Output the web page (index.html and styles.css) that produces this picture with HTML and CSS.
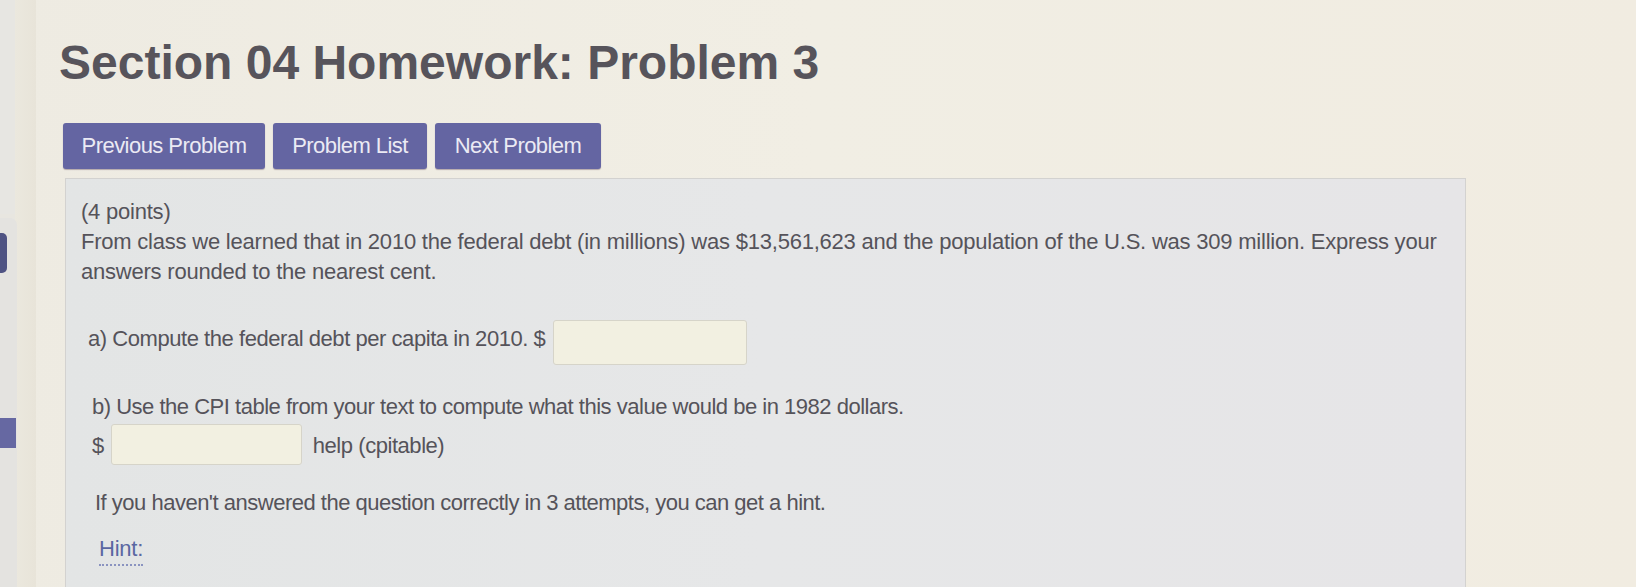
FILE: index.html
```html
<!DOCTYPE html>
<html>
<head>
<meta charset="utf-8">
<title>Section 04 Homework: Problem 3</title>
<link rel="stylesheet" href="styles.css">
</head>
<body>
<div class="page">
  <aside class="side">
    <div class="side-top"></div>
    <div class="side-card">
      <div class="side-pill"></div>
      <div class="side-block"></div>
    </div>
  </aside>
  <main class="main">
    <h1 class="title">Section 04 Homework: Problem 3</h1>
    <nav class="nav">
      <a class="btn btn-prev">Previous Problem</a>
      <a class="btn btn-list">Problem List</a>
      <a class="btn btn-next">Next Problem</a>
    </nav>
    <section class="panel">
      <p class="intro">(4 points)<br>From class we learned that in 2010 the federal debt (in millions) was $13,561,623 and the population of the U.S. was 309 million. Express your answers rounded to the nearest cent.</p>
      <div class="row row-a">
        <span class="label">a) Compute the federal debt per capita in 2010. $</span>
        <span class="field field-a"></span>
      </div>
      <p class="line-b">b) Use the CPI table from your text to compute what this value would be in 1982 dollars.</p>
      <div class="row row-b">
        <span class="label">$</span>
        <span class="field field-b"></span>
        <span class="label help">help (cpitable)</span>
      </div>
      <p class="note">If you haven't answered the question correctly in 3 attempts, you can get a hint.</p>
      <p class="hint"><span class="hint-link">Hint:</span></p>
    </section>
  </main>
</div>
</body>
</html>
```
FILE: styles.css
```css
html, body {
  margin: 0;
  padding: 0;
}
body {
  background: linear-gradient(90deg, #eeebe2 0%, #f1eee4 50%, #f1ece1 100%);
  font-family: "Liberation Sans", Arial, sans-serif;
  color: #55535a;
  height: 587px;
  overflow: hidden;
}
.page {
  display: flex;
  height: 587px;
}
.side {
  width: 36px;
  flex: none;
  display: flex;
  flex-direction: column;
  background: linear-gradient(90deg, #e8e6e0 0 15px, #ebe8de 15px, #e8e4d9 100%);
}
.side-top {
  height: 214px;
  width: 15px;
  background: #e7e6e2;
}
.side-card {
  flex: 1;
  width: 17px;
  margin-top: 4px;
  background: #e4e3e0;
  border-top-right-radius: 7px;
  display: flex;
  flex-direction: column;
  padding-top: 15px;
}
.side-pill {
  width: 7px;
  height: 40px;
  background: #4f5383;
  border-radius: 0 5px 5px 0;
}
.side-block {
  width: 16px;
  height: 30px;
  margin-top: 145px;
  background: #6668a2;
}
.main {
  flex: 1;
  padding-left: 23px;
  display: flex;
  flex-direction: column;
}
.title {
  margin: 36px 0 0 0;
  font-size: 48px;
  line-height: 54px;
  font-weight: bold;
  color: #57545b;
}
.nav {
  display: flex;
  gap: 8px;
  margin: 33px 0 0 4px;
}
.btn {
  display: block;
  height: 46px;
  line-height: 46px;
  box-sizing: border-box;
  text-align: center;
  background: #6465a2;
  color: #ebeaf4;
  font-size: 22px;
  letter-spacing: -0.55px;
  border-radius: 3px;
  box-shadow: 0 1px 1px rgba(70, 40, 70, 0.35);
}
.btn-prev { width: 202px; }
.btn-list { width: 154px; }
.btn-next { width: 166px; }
.panel {
  margin: 9px 0 0 6px;
  width: 1401px;
  flex: 1;
  box-sizing: border-box;
  background: linear-gradient(90deg, #e3e5e5 0%, #e6e7e8 50%, #e6e5e7 100%);
  border: 1px solid #d3d2d0;
  border-bottom: none;
  padding: 18px 0 0 15px;
  font-size: 22px;
  letter-spacing: -0.22px;
}
.panel p {
  margin: 0;
}
.intro {
  line-height: 30px;
  width: 1370px;
}
.row {
  display: flex;
  align-items: flex-start;
  line-height: 30px;
}
.row-a {
  margin: 33px 0 0 7px;
  letter-spacing: -0.45px;
}
.row-a .label {
  padding-top: 4px;
}
.field {
  display: block;
  background: #f2f0e1;
  border: 1px solid #d6d4c9;
  border-radius: 3px;
  box-sizing: border-box;
}
.field-a {
  width: 194px;
  height: 45px;
  margin-left: 8px;
}
.panel .line-b {
  margin: 27px 0 0 11px;
  line-height: 30px;
  letter-spacing: -0.49px;
}
.row-b {
  margin: 2px 0 0 11px;
  letter-spacing: -0.45px;
}
.row-b .label {
  padding-top: 7px;
}
.field-b {
  width: 191px;
  height: 41px;
  margin-left: 7px;
}
.help {
  margin-left: 11px;
}
.panel .note {
  margin: 23px 0 0 14px;
  line-height: 30px;
  letter-spacing: -0.5px;
}
.panel .hint {
  margin: 16px 0 0 18px;
  line-height: 30px;
}
.hint-link {
  color: #5a67a2;
  border-bottom: 2px dotted #8a93c0;
  padding-bottom: 3px;
}
```
